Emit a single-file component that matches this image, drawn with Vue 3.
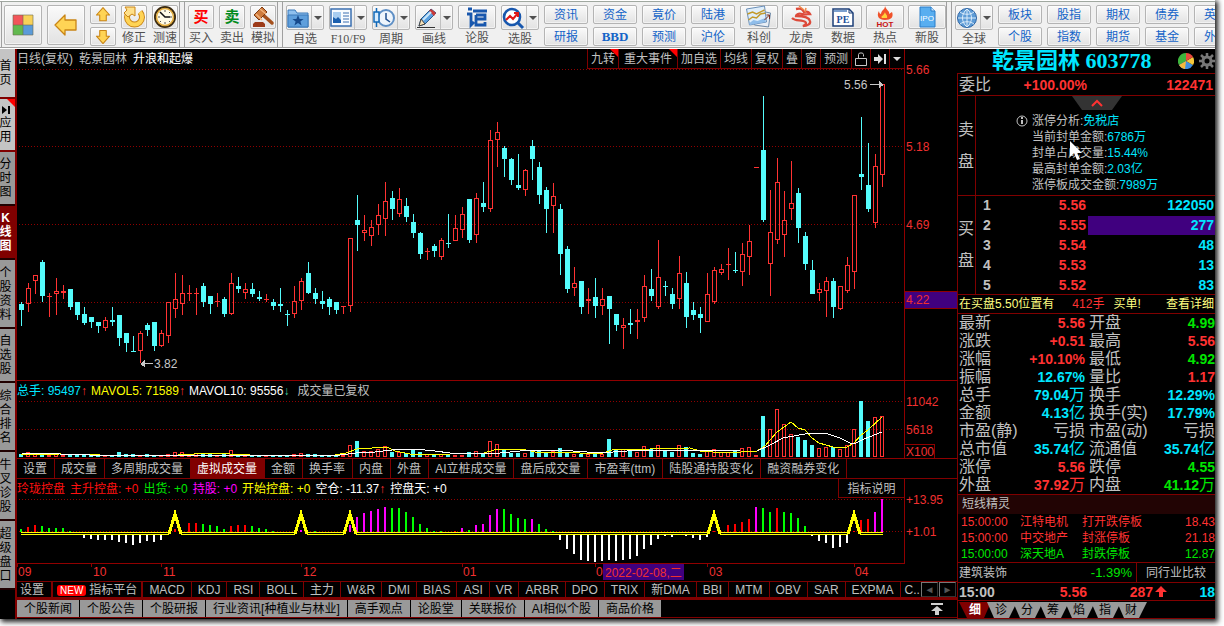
<script setup>
const px = (i) => 21 + 7 * i

// kind, wick top, wick bottom, body top, body bottom (r = rising, c = falling)
const candleRows = `c302,326,304,310 r283,312,288,304 r275,294,275,281 c260,302,262,296 r293,317,296,297 r278,315,291,294 r285,299,291,293 c289,310,289,307 c302,320,302,315 c307,325,314,323
c317,328,317,322 c322,333,322,326 r317,331,320,328 c307,326,320,322 c315,346,315,338 c333,352,333,343 c336,352,351,352 r331,363,333,351 c323,336,325,330 c322,351,322,346
r330,347,333,346 r302,343,302,336 r273,318,299,309 r275,315,293,304 r285,301,293,294 r288,315,293,294 c283,307,286,302 c296,314,296,304 r293,307,301,302 c297,317,299,314
r273,315,283,314 c277,293,286,289 r283,299,289,293 c283,297,289,294 c291,301,297,299 r294,302,299,300 c299,310,302,306 c288,312,304,306 c310,326,314,315 r286,318,301,314
r278,310,281,301 c262,294,273,293 c288,304,293,299 c291,309,301,304 c297,315,299,307 c302,314,302,310 r306,314,306,307 r238,312,238,306 c195,251,220,225 r215,241,230,233
r220,246,227,236 r204,235,215,225 r182,236,201,219 c191,220,198,209 r188,217,199,214 c198,222,206,217 c214,238,222,233 c232,259,233,254 r248,260,251,252 c244,257,246,251
r238,260,240,257 c214,248,243,244 r215,241,228,241 r207,238,214,230 c199,243,199,240 r193,243,198,235 c182,212,203,207 r130,212,140,209 r122,167,132,140 c146,177,148,159
c158,185,159,180 c154,190,185,188 r169,196,170,190 c140,180,146,159 c162,204,167,195 c187,233,190,209 r183,233,196,206 c204,275,209,254 c246,293,249,289 r267,296,283,288
c281,314,281,307 r288,314,299,301 c278,318,297,306 r288,315,299,306 c296,344,296,309 c314,331,314,325 r318,349,325,328 c309,334,323,325 r309,339,320,322 r275,322,286,318
c269,301,289,296 r240,309,277,307 c281,296,286,287 c288,309,294,304 r256,309,273,299 c272,328,283,317 c302,320,310,315 c307,333,314,318 r273,322,294,322 r267,304,270,302
r264,275,269,273 r248,280,264,265 c252,273,270,271 r243,286,254,272 r225,275,241,257 r167,168,167,168 c96,222,150,220 r190,296,232,264 r158,244,182,240 r191,257,220,235
r161,220,203,209 c188,243,193,228 c232,270,236,264 c260,294,270,294 r283,301,289,293 r277,317,281,291 c278,318,281,307 r286,310,286,309 r257,293,265,291 r195,289,195,272
c117,190,174,177 c143,212,185,209 r154,228,166,223 r84,187,84,175`
const candles = candleRows.split(/\s+/).map((s, i) => {
  const [top, bottom, open, close] = s.slice(1).split(',').map(Number)
  return { x: px(i), up: s[0] === 'r', top, bottom, open, close }
})

const volumes = [3, 5, 3, 3, 2, 3, 2, 2, 2, 2, 2, 2, 2, 2, 5, 3, 3, 2, 3, 2, 2, 3, 5, 5, 3, 4, 3, 3, 2, 3, 7, 3, 3, 2, 2, 2, 2, 2, 2, 3, 4, 3, 3, 2, 2, 2, 2, 12, 16, 6, 6, 8, 11, 5, 5, 4, 7, 5, 3, 2, 3, 3, 2, 2, 5, 6, 4, 16, 13, 7, 4, 4, 4, 7, 7, 5, 6, 9, 4, 3, 3, 3, 4, 3, 18, 7, 8, 6, 5, 11, 8, 12, 7, 5, 12, 10, 4, 3, 6, 8, 5, 5, 6, 9, 10, 2, 41, 28, 48, 33, 23, 20, 17, 12, 9, 10, 10, 8, 12, 28, 56, 36, 40, 41]
const volumeBars = volumes.map((h, i) => ({ x: px(i), h, up: candles[i].up }))

const controlRows = `g3 r5 r7 g6 g4 g4 g4 g1 n0 w3 w4 w5 w5 w5 w7 w8 w10 w8 w6 w7 w5 n0 r3 n0 r9 r9 g8 g7 g6 g3 r6 r7 r7 g6 g4 g3 g1 n0 n0 n0 m2 n0 g1 n0 n0 n0 n0 m7 m15 m19 m21 m23 m25 g24 g24 g20 g15 g8 g4 g1 g1 n0 r1 m4 g2 m7 m8 m17 m23 g23 g18 g14 g13 m13 g8 g3 g1 w5 w14 w19 w25 w26 w27 w26 w25 w26 w25 w24 w21 w14 w10 w4 w1 w2 n0 w1 w3 w5 w2 r1 n0 r7 r8 r10 r13 m25 g24 g20 r24 g20 g19 g14 g6 w1 w6 w8 w13 w12 w8 r1 r12 r13 m20 m33`
const hues = { g: '#00ff00', r: '#ff0000', m: '#ff00ff', w: '#ffffff', n: 'none' }
const controlBars = controlRows.split(' ').map((s, i) => {
  const h = Number(s.slice(1))
  return { x: px(i), y: s[0] === 'w' ? 535 : 532 - h, h, fill: hues[s[0]] }
})
const peaks = [175, 301, 350, 714, 854]
const baseSegments = [[21, 169], [181, 295], [307, 344], [356, 708], [720, 848], [860, 883]]

const months = [
  { x: 18, t: '09' }, { x: 93, t: '10' }, { x: 163, t: '11' }, { x: 303, t: '12' },
  { x: 463, t: '01' }, { x: 596, t: '0' }, { x: 709, t: '03' }, { x: 855, t: '04' },
]

const arrow = (d) => `<path d="${d}" fill="#ffd455" stroke="#c98516" stroke-width="1.3" stroke-linejoin="round"/>`
const icons = {
  home: '<rect x="1" y="1" width="10" height="10" fill="#f2555a"/><rect x="11" y="1" width="10" height="10" fill="#f8d158"/><rect x="1" y="11" width="10" height="10" fill="#62b94f"/><rect x="11" y="11" width="10" height="10" fill="#5b9bd9"/><path d="M1 1h20v20H1zM11 1v20M1 11h20" fill="none" stroke="#6a6a50" stroke-opacity=".6"/>',
  back: arrow('M0 11 10 1v5h11v10H10v5z'),
  up: arrow('M11 2 19 11h-4v7H7v-7H3z'),
  down: arrow('M11 19 3 10h4V3h8v7h4z'),
  fix: '<path d="M6 6a7.500 7.500 0 1 0 11 0" fill="none" stroke="#c98516" stroke-width="6"/><path d="M6 6a7.500 7.500 0 1 0 11 0" fill="none" stroke="#ffd455" stroke-width="4"/><path d="M2 1h10v9l-3-2-4 3-4-4 3-3z" fill="#ffe08a" stroke="#c98516"/>',
  clock: '<circle cx="11" cy="11" r="10" fill="#fffbe6" stroke="#3a2a10" stroke-width="2"/><circle cx="11" cy="11" r="8.500" fill="none" stroke="#e0a838" stroke-width="1.500"/><path d="M6 6l5 5h5" fill="none" stroke="#111" stroke-width="1.500"/><path d="M11 4v2M11 16v2M4 11h2M16 11h2M6 16l1-1M15 15l1 1M15 7l1-1" stroke="#555"/>',
  gavel: '<path d="M10 8l10 9" stroke="#a5501c" stroke-width="3.500" stroke-linecap="round"/><path d="M2 9 10 1l5 5-8 8z" fill="#cf7b3c" stroke="#7c3a12"/><path d="M4 8l6 6M8 3l6 5" stroke="#f2b27a" stroke-width="1.500"/><path d="M1 21v-3l2-2h8l2 2v3z" fill="#9c3a18"/>',
  folder: '<path d="M1 3h7l2 3h11v14H1z" fill="#8fc0ee" stroke="#3a78b8"/><path d="M1 8h20v12H1z" fill="#5f9fdc" stroke="#3a78b8"/><path d="M11 8l1.600 4h4l-3.200 2.500 1.200 4L11 16l-3.600 2.500 1.200-4L5.400 12h4z" fill="#174a8c"/>',
  news: '<rect x="1" y="2" width="20" height="17" fill="#f8fbff" stroke="#3a6fb0" stroke-width="1.500"/><path d="M3 5h8v11H3z" fill="#a9cdf0"/><path d="M3 10l3 2 2-2 3 3v3H3z" fill="#1b5fae"/><path d="M13 6h6M13 9h6M13 12h6M13 15h6" stroke="#3a6fb0"/>',
  period: '<circle cx="13" cy="11" r="8" fill="#eef5fc" stroke="#5e8fc5" stroke-width="2"/><path d="M13 6v6l4 3" fill="none" stroke="#1f4f8f" stroke-width="1.500"/><path d="M3.500 1v19" stroke="#0f68b8" stroke-width="1.500"/><path d="M1 5h5v10H1z" fill="#d8ecfd" stroke="#0f68b8" stroke-width="1.500"/>',
  pen: '<path d="M3 19l2-7L15 2l5 4-11 11z" fill="#5aa0e0" stroke="#28588c"/><path d="M15 2l5 4-2 3-5-5z" fill="#c83a3a"/><path d="M3 19l2-7 4 5z" fill="#f8e2b8" stroke="#444"/><path d="M7 13 15 5" stroke="#cbe6fa" stroke-width="2"/><path d="M1 20.500h18" stroke="#333"/>',
  forum: '<path d="M2 3h4M1 8h4v11l3-3M7 5h14M10 9v10h9v-3M10 9h9v4h-9" fill="none" stroke="#1857ad" stroke-width="2.800"/>',
  pick: '<circle cx="10" cy="10" r="8" fill="#fff" stroke="#1857ad" stroke-width="2.600"/><path d="M16 16l5 5" stroke="#1857ad" stroke-width="3"/><path d="M4 13l4-4 3 3 5-6M12 6h4v4" fill="none" stroke="#e01818" stroke-width="2"/>',
  sci: '<path d="M9 4l15 3-2 14-14-2z" fill="#e8eef5" stroke="#6f8aa8"/><path d="M0 3 18 0l2 16-17 3z" fill="#dfeefb" stroke="#6a8fb8"/><path d="M1 8l5-2 4 2 8-4M2 14l4-3 4 1 4-4 5-1" fill="none" stroke="#c39a2a" stroke-width="1.500"/><path d="M3 17l4-3 4 1 8-3v4L3 19z" fill="#8fbdea"/><path d="M18 14l5-5M20 9h3v4" fill="none" stroke="#7c3020"/>',
  dragon: '<path d="M6 3c5-1 6 0 8 3 3-1 5 0 6 2-3 0-4 1-8 0-4-1-6 1-6 2 6 0 13 1 14 5 1 3-3 5-7 5 4-2 4-4 0-5-4-1-8 0-11-3" fill="none" stroke="#dd4a3a" stroke-width="2.300"/><path d="M9 0l5 4M16 2l-1 4" stroke="#ef8a4a" stroke-width="1.500"/>',
  pe: '<path d="M1 3h16l4 4v13H1z" fill="#fff" stroke="#1c3f78" stroke-width="1.500"/><path d="M17 3v4h4" fill="none" stroke="#1c3f78"/><path d="M2 5h13" stroke="#7ba0cf" stroke-width="2"/><text x="11" y="17" text-anchor="middle" font-size="10" font-weight="bold" fill="#1c4f9a" font-family="Liberation Serif">PE</text>',
  hot: '<path d="M11 0c1 4 5 5 4 8l3-2c2 5-1 8-7 8s-9-4-6-9c0 2 1 3 2 3 0-4 4-4 4-8z" fill="#f0522a"/><path d="M11 6c0 2 3 3 2 6H8c-2-2 2-2 3-6z" fill="#ffd23c"/><text x="11" y="21" text-anchor="middle" font-size="8" font-weight="bold" fill="#c81414" font-family="Liberation Sans">HOT</text>',
  ipo: '<path d="M4 1h11l4 4v16H4z" fill="#58aef0" stroke="#2a7cc8"/><path d="M15 1v4h4" fill="#c7e4fb" stroke="#2a7cc8"/><text x="11" y="15" text-anchor="middle" font-size="8" fill="#fff" font-family="Liberation Sans">IPO</text>',
  globe: '<circle cx="11" cy="11" r="9.500" fill="#5d9bd6" stroke="#2c64a4"/><path d="M11 2v18M2 11h18M4 5c4 3 10 3 14 0M4 17c4-3 10-3 14 0M11 2c-6 5-6 13 0 18M11 2c6 5 6 13 0 18" fill="none" stroke="#dcecfa"/>',
}

const groupA = [{ label: '修正', icon: 'fix' }, { label: '测速', icon: 'clock' }]
const groupB = [{ label: '买入', glyph: '买', tone: 'buy' }, { label: '卖出', glyph: '卖', tone: 'sell' }, { label: '模拟', icon: 'gavel' }]
const groupC = [
  { label: '自选', icon: 'folder', drop: true }, { label: 'F10/F9', icon: 'news', drop: true }, { label: '周期', icon: 'period', drop: true },
  { label: '画线', icon: 'pen', drop: true }, { label: '论股', icon: 'forum' }, { label: '选股', icon: 'pick', drop: true },
]
const pairsA = [['资讯', '研报'], ['资金', 'BBD'], ['竟价', '预测'], ['陆港', '沪伦']]
const groupD = [{ label: '科创', icon: 'sci' }, { label: '龙虎', icon: 'dragon' }, { label: '数据', icon: 'pe' }, { label: '热点', icon: 'hot' }, { label: '新股', icon: 'ipo' }]
const pairsB = [['板块', '个股'], ['股指', '指数'], ['期权', '期货'], ['债券', '基金'], ['英', '外']]

const sideTabs = [
  { t: '首页', h: 's50', tone: 'light' }, { t: '应用', h: 's52', tone: 'light', flag: true }, { t: '分时图', h: 's54' },
  { t: 'K线图', h: 's54', tone: 'active' }, { t: '个股资料', h: 's68' }, { t: '自选股', h: 's54' },
  { t: '综合排名', h: 's68' }, { t: '牛叉诊股', h: 's68' }, { t: '超级盘口', h: 's68' },
]
const chartTools = [{ t: '九转', flag: true }, { t: '重大事件', flag: true, wide: true }, { t: '加自选' }, { t: '均线' }, { t: '复权' }, { t: '叠' }, { t: '窗' }, { t: '预测' }]
const volumeTabs = ['设置', '成交量', '多周期成交量', '虚拟成交量', '金额', '换手率', '内盘', '外盘', 'AI立桩成交量', '盘后成交量', '市盈率(ttm)', '陆股通持股变化', '融资融券变化']
const indicatorTabs = ['MACD', 'KDJ', 'RSI', 'BOLL', '主力', 'W&R', 'DMI', 'BIAS', 'ASI', 'VR', 'ARBR', 'DPO', 'TRIX', '新DMA', 'BBI', 'MTM', 'OBV', 'SAR', 'EXPMA', 'C..']
const pageTabs = ['个股新闻', '个股公告', '个股研报', '行业资讯[种植业与林业]', '高手观点', '论股堂', '关联报价', 'AI相似个股', '商品价格']

const analysis = [
  ['涨停分析', '免税店'], ['当前封单金额', '6786万'], ['封单占成交量', '15.44%'], ['最高封单金额', '2.03亿'], ['涨停板成交金额', '7989万'],
]
const bids = [['5.56', '122050'], ['5.55', '277'], ['5.54', '48'], ['5.53', '13'], ['5.52', '83']]
const stats = [
  ['最新', '5.56', 'red', '开盘', '4.99', 'green'],
  ['涨跌', '+0.51', 'red', '最高', '5.56', 'red'],
  ['涨幅', '+10.10%', 'red', '最低', '4.92', 'green'],
  ['振幅', '12.67%', 'cyan', '量比', '1.17', 'red'],
  ['总手', '79.04万', 'cyan', '换手', '12.29%', 'cyan'],
  ['金额', '4.13亿', 'cyan', '换手(实)', '17.79%', 'cyan'],
  ['市盈(静)', '亏损', 'grey', '市盈(动)', '亏损', 'grey'],
  ['总市值', '35.74亿', 'cyan', '流通值', '35.74亿', 'cyan'],
  ['涨停', '5.56', 'red', '跌停', '4.55', 'green'],
  ['外盘', '37.92万', 'red', '内盘', '41.12万', 'green'],
]
const number = (v) => v.replace(/[^\d.+\-%]/g, '')
const unit = (v) => v.replace(/[\d.+\-%]/g, '')
const alerts = [
  ['15:00:00', '江特电机', '打开跌停板', '18.43', 'red'],
  ['15:00:00', '中交地产', '封涨停板', '21.18', 'red'],
  ['15:00:00', '深天地A', '封跌停板', '12.87', 'green'],
]
const detailTabs = ['细', '诊', '分', '筹', '焰', '指', '财']
</script>

<template>
  <div class="app">
    <header class="toolbar">
      <div class="group first">
        <button class="face big" aria-label="主页"><svg class="ico" viewBox="0 0 22 22" v-html="icons.home" /></button>
        <button class="face big" aria-label="后退"><svg class="ico" viewBox="0 0 22 22" v-html="icons.back" /></button>
        <div class="stack arrows">
          <button class="face mini" aria-label="上一个"><svg class="ico small" viewBox="0 0 22 22" v-html="icons.up" /></button>
          <button class="face mini" aria-label="下一个"><svg class="ico small" viewBox="0 0 22 22" v-html="icons.down" /></button>
        </div>
        <button v-for="b in groupA" :key="b.label" class="tool slim">
          <span class="face"><svg class="ico" viewBox="0 0 22 22" v-html="icons[b.icon]" /></span><span>{{ b.label }}</span>
        </button>
      </div>
      <div class="group">
        <button v-for="b in groupB" :key="b.label" class="tool slim">
          <span class="face"><svg v-if="b.icon" class="ico" viewBox="0 0 22 22" v-html="icons[b.icon]" /><b v-else :class="['glyph', b.tone]">{{ b.glyph }}</b></span><span>{{ b.label }}</span>
        </button>
      </div>
      <div class="group open">
        <button v-for="b in groupC" :key="b.label" class="tool">
          <span class="face"><svg class="ico" viewBox="0 0 22 22" v-html="icons[b.icon]" /><i v-if="b.drop" class="drop" /></span><span :class="{ serif: b.label === 'F10/F9' }">{{ b.label }}</span>
        </button>
        <div v-for="p in pairsA" :key="p[0]" class="stack">
          <button v-for="t in p" :key="t" :class="['face', 'text', { latin: t === 'BBD' }]">{{ t }}</button>
        </div>
      </div>
      <div class="group tight">
        <button v-for="b in groupD" :key="b.label" class="tool">
          <span class="face"><svg :class="['ico', { wide: b.icon === 'sci' }]" :viewBox="b.icon === 'sci' ? '0 0 25 22' : '0 0 22 22'" v-html="icons[b.icon]" /></span><span>{{ b.label }}</span>
        </button>
      </div>
      <div class="group last">
        <button class="tool">
          <span class="face"><svg class="ico" viewBox="0 0 22 22" v-html="icons.globe" /><i class="drop" /></span><span>全球</span>
        </button>
        <div v-for="p in pairsB" :key="p[0]" class="stack">
          <button v-for="t in p" :key="t" :class="['face', 'text', { edge: t.length === 1 }]">{{ t }}</button>
        </div>
      </div>
    </header>

    <div class="body">
      <nav class="side">
        <button v-for="s in sideTabs" :key="s.t" :class="[s.h, s.tone]">
          <i v-if="s.flag" class="flag" />
          <svg v-if="s.flag" class="next" viewBox="0 0 8 8"><path d="M0 0l5 4-5 4zM6 0h2v8H6z" /></svg>
          <span>{{ s.t }}</span>
        </button>
      </nav>

      <main class="main">
        <div class="chart-head">
          <h1>日线(复权)</h1><span>乾景园林</span><span class="white">升浪和起爆</span>
          <div class="chart-tools">
            <button v-for="t in chartTools" :key="t.t" :class="{ wide: t.wide }">{{ t.t }}<i v-if="t.flag" class="flag" /></button>
            <button aria-label="锁定"><svg class="glyph-ico" viewBox="0 0 12 14"><path d="M.5 6.500h11v7H.5zM3.500 6.500v-4l1-1.500h3l1 1.500v2" fill="none" stroke="#c8c8c8" /></svg></button>
            <button aria-label="最新"><svg class="glyph-ico" viewBox="0 0 12 14"><path d="M0 5h4V2l5 5-5 5V9H0zM10 2h2v10h-2z" fill="#e0e0e0" /></svg></button>
            <button class="menu" aria-label="更多"><i class="drop light" /></button>
          </div>
        </div>

        <svg class="plot price" viewBox="17 69 940 312" preserveAspectRatio="xMaxYMid meet">
          <g stroke="#900000" stroke-dasharray="1 2">
            <path d="M19 69.500H903M19 146.500H903M19 224.500H903M19 302.500H903" />
          </g>
          <g v-for="c in candles" :key="c.x">
            <template v-if="c.up">
              <rect v-if="c.close - c.open < 3" :x="c.x - 2" :y="c.open" width="5" :height="c.close - c.open" fill="#ff3232" />
              <rect v-else :x="c.x - 1.5" :y="c.open + 0.5" width="4" :height="c.close - c.open - 1" fill="none" stroke="#ff3232" />
              <rect v-if="c.open > c.top" :x="c.x" :y="c.top" width="1" :height="c.open - c.top" fill="#ff3232" />
              <rect v-if="c.bottom > c.close" :x="c.x" :y="c.close" width="1" :height="c.bottom - c.close" fill="#ff3232" />
            </template>
            <template v-else>
              <rect :x="c.x" :y="c.top" width="1" :height="c.bottom - c.top" fill="#54fcfc" />
              <rect :x="c.x - 2" :y="c.open" width="5" :height="c.close - c.open" fill="#54fcfc" />
            </template>
          </g>
          <path d="M870 84.500h13M141 363.500h12" stroke="#c8c8c8" />
          <path d="M879 81v7l5-3zM145 360v7l-5-3z" fill="#c8c8c8" />
          <text x="844" y="89" fill="#c8c8c8">5.56</text>
          <text x="154" y="368" fill="#c8c8c8">3.82</text>
          <path d="M904.500 49V381M17 380.500H957" stroke="#900000" />
          <rect x="905" y="291" width="52" height="18" fill="#40007f" />
          <path d="M905 291.500h52M905 308.500h52" stroke="#900000" />
          <g fill="#f03030"><text x="906" y="74">5.66</text><text x="906" y="151">5.18</text><text x="906" y="229">4.69</text><text x="906" y="304">4.22</text></g>
        </svg>

        <div class="legend">
          <span class="cyan">总手: 95497<i>↑</i></span><span class="yellow">MAVOL5: 71589<i>↑</i></span><span class="white">MAVOL10: 95556<i class="down">↓</i></span><span>成交量已复权</span>
        </div>
        <svg class="plot volume" viewBox="17 401 940 58" preserveAspectRatio="xMaxYMid meet">
          <path d="M19 401.500H903M19 429.500H903" stroke="#900000" stroke-dasharray="1 2" />
          <g v-for="v in volumeBars" :key="v.x">
            <rect v-if="v.up && v.h > 2" :x="v.x - 1.500" :y="457.500 - v.h" width="3" :height="v.h - 1" fill="none" stroke="#ff3232" />
            <rect v-else :x="v.x - 2" :y="457 - v.h" width="4" :height="v.h" :fill="v.up ? '#ff3232' : '#54fcfc'" />
          </g>
          <path d="M21 455 60 454 100 455H178L210 453 250 455H335L346 453 357 449 372 448 387 447 395 451 410 454H450L484 453 498 449H522L535 452H560L600 454 612 450 650 449 690 448 700 451 725 453 757 451 765 446 777 432 791 422 798 428 805 430 812 438 819 443 833 447H847L854 443 861 435 868 430 882 417" fill="none" stroke="#ffff00" />
          <path d="M21 453 60 454 90 455H340L356 453 375 452 392 450 415 449 435 451 450 453H500L520 451 560 450 600 453 640 450H690L740 451 757 451 770 445 783 438 805 434 825 433 840 438 850 443H856L864 439 882 432" fill="none" stroke="#ffffff" />
          <path d="M904.500 381V459M17 458.500H957M905 444.500h29.500v13.500" stroke="#900000" fill="none" />
          <g fill="#f03030"><text x="906" y="406">11042</text><text x="906" y="434">5618</text><text x="906" y="456">X100</text></g>
        </svg>

        <div class="tabs">
          <button v-for="t in volumeTabs" :key="t" :class="{ active: t === '虚拟成交量' }">{{ t }}</button>
        </div>

        <div class="legend control">
          <span class="red">玲珑控盘</span><span class="red">主升控盘: +0</span><span class="green">出货: +0</span><span class="magenta">持股: +0</span><span class="yellow">开始控盘: +0</span><span class="white">空仓: -11.37<i>↑</i></span><span class="white">控盘天: +0</span>
          <button class="explain">指标说明</button>
        </div>
        <svg class="plot months" viewBox="17 499 940 82" preserveAspectRatio="xMaxYMid meet">
          <path d="M19 499.500H903M19 531.500H903" stroke="#900000" stroke-dasharray="1 2" />
          <rect v-for="b in controlBars" :key="b.x" :x="b.x - 1" :y="b.y" width="2" :height="b.h" :fill="b.fill" />
          <g fill="#ffff00">
            <template v-for="s in baseSegments" :key="s[0]">
              <rect :x="s[0]" y="532" :width="s[1] - s[0]" height="1" /><rect :x="s[0]" y="534" :width="s[1] - s[0]" height="1" />
            </template>
          </g>
          <path v-for="p in peaks" :key="p" :d="`M${p - 6} 534 l6 -20 6 20`" fill="none" stroke="#ffff00" stroke-width="3" />
          <path d="M904.500 479V564M17 563.500H905M17.500 563v4M91.500 563v4M161.500 563v4M301.500 563v4M462.500 563v4M595.500 563v4M707.500 563v4M854.500 563v4" stroke="#900000" fill="none" />
          <g fill="#f03030">
            <text x="906" y="504">+13.95</text><text x="906" y="536">+1.01</text>
            <text v-for="m in months" :key="m.t" :x="m.x" y="576">{{ m.t }}</text>
          </g>
          <rect x="603" y="564" width="81" height="16" fill="#40007f" />
          <text x="605" y="577" fill="#f03030">2022-02-08,二</text>
        </svg>

        <div class="tabs indicator">
          <button class="set">设置</button>
          <button class="platform"><b>NEW</b>指标平台</button>
          <button v-for="t in indicatorTabs" :key="t" :class="{ cut: t === 'C..' }">{{ t }}</button>
          <button class="scroll" aria-label="向左">◄</button><button class="scroll" aria-label="向右">►</button>
        </div>
        <div class="pages">
          <button v-for="t in pageTabs" :key="t">{{ t }}</button>
          <button class="top" aria-label="展开"><svg viewBox="0 0 12 12"><path d="M0 0h12v2H0zM6 3l6 5H8v4H4V8H0z" fill="#d0d0d0" /></svg></button>
        </div>
      </main>

      <aside class="quote">
        <div class="name">
          <h2>乾景园林 603778</h2>
          <svg class="pie" viewBox="0 0 16 16"><path d="M8 8V0a8 8 0 0 0-7 12z" fill="#3cb43c" /><path d="M8 8 1 12a8 8 0 0 0 14 0z" fill="#3f8fe0" /><path d="M8 8l7 4A8 8 0 0 0 15 4z" fill="#f5c83c" /><path d="M8 8V0a8 8 0 0 1 7 4z" fill="#e8483c" /><path d="M1 12 8 8l-1 8a8 8 0 0 1-6-4z" fill="#f5b83c" /></svg>
          <svg class="gear" viewBox="0 0 16 16"><circle cx="8" cy="8" r="4" fill="none" stroke="#777" stroke-width="3" /><path d="M8 0v3M8 13v3M0 8h3M13 8h3M2 2l3 3M11 11l3 3M14 2l-3 3M5 11l-3 3" stroke="#777" stroke-width="2.500" /></svg>
        </div>
        <div class="sheet">
          <div class="ratio"><span>委比</span><b class="red">+100.00%</b><b class="red">122471</b></div>
          <section class="asks">
            <div class="word"><span>卖</span><span>盘</span></div>
            <div class="info">
              <button class="fold" aria-label="收起"><svg viewBox="0 0 50 14"><path d="M0 0h50l-10 14H10z" fill="#333" /><path d="M20 10l5-5 5 5" fill="none" stroke="#ff3232" stroke-width="2" /></svg></button>
              <svg class="about" viewBox="0 0 12 12"><circle cx="6" cy="6" r="5" fill="none" stroke="#c0c0c0" /><path d="M5 2h2v2H5zM5 5h2v4H5z" fill="#c0c0c0" /></svg>
              <p v-for="a in analysis" :key="a[0]">{{ a[0] }}:<span class="cyan">{{ a[1] }}</span></p>
              <svg class="cursor" viewBox="0 0 12 19"><path d="M0 0v16l4-4 3 7 3-1-3-6h5z" fill="#fff" /></svg>
            </div>
          </section>
          <section class="bids">
            <div class="word"><span>买</span><span>盘</span></div>
            <table>
              <tbody>
                <tr v-for="(b, i) in bids" :key="i"><th>{{ i + 1 }}</th><td class="red">{{ b[0] }}</td><td class="cyan amount" :class="{ hit: i === 1 }"><span>{{ b[1] }}</span></td></tr>
              </tbody>
            </table>
          </section>
          <div class="notice"><span>在买盘5.50位置有</span><span class="red">412手</span><span>买单!</span><a href="#">查看详细</a></div>
          <table class="stats">
            <tbody>
              <tr v-for="s in stats" :key="s[0]">
                <th>{{ s[0] }}</th><td :class="s[2]"><b>{{ number(s[1]) }}</b>{{ unit(s[1]) }}</td>
                <th class="second">{{ s[3] }}</th><td :class="s[5]"><b>{{ number(s[4]) }}</b>{{ unit(s[4]) }}</td>
              </tr>
            </tbody>
          </table>
          <h3>短线精灵</h3>
          <table class="alerts">
            <tbody>
              <tr v-for="a in alerts" :key="a[1]" :class="a[4]"><td>{{ a[0] }}</td><td>{{ a[1] }}</td><td>{{ a[2] }}</td><td>{{ a[3] }}</td></tr>
            </tbody>
          </table>
          <div class="sector"><span>建筑装饰</span><span class="green change">-1.39%</span><button>同行业比较</button></div>
          <div class="tick"><b>15:00</b><b class="red">5.56</b><b class="red">287</b><svg viewBox="0 0 12 12"><path d="M6 0l6 6H8v5H4V6H0z" fill="#ff3232" /></svg><b class="cyan">18</b></div>
          <div class="detail"><button v-for="t in detailTabs" :key="t" :class="{ active: t === '细' }">{{ t }}</button></div>
        </div>
      </aside>
    </div>
  </div>
</template>

<style>
html { background: #fff; }
body { margin: 0; overflow: hidden; }
</style>

<style scoped>
.app { margin: 0 9px 8px 0; background: #000; color: #c0c0c0; font: 12px/16px "Liberation Sans", "Noto Sans CJK SC", sans-serif; box-shadow: 2px 2px 5px 1px #222; }
button { margin: 0; padding: 0; border: 0; background: none; color: inherit; font: inherit; white-space: nowrap; }
table { border-collapse: collapse; }
th, td { padding: 0; font-weight: normal; text-align: left; }
h1, h2, h3, p { margin: 0; font: inherit; }
i { font-style: normal; }
.red { color: #ff3232; }
.green { color: #00e600; }
.cyan { color: #00e6ff; }
.grey { color: #c0c0c0; }
.white { color: #fff; }
.yellow { color: #ffff00; }
.magenta { color: #ff00ff; }

.toolbar { display: flex; height: 49px; box-sizing: border-box; overflow: hidden; background: #f0f0f0; border-top: 1px solid #fff; border-bottom: 1px solid #fff; box-shadow: inset 0 1px #a0a8a0, inset 0 -1px #a0a0a0; color: #505050; }
.group { display: flex; flex: none; gap: 5px; padding: 4px 1px 0 3px; margin-left: 4px; border-left: 1px solid #a0a0a0; border-right: 1px solid #a0a0a0; }
.group.first { margin-left: 1px; padding-left: 2px; padding-right: 1px; }
.group.tight { gap: 4px; margin-left: 0; border-left: 0; padding-left: 5px; padding-right: 0; }
.group.open { border-right: 0; padding-right: 0; }
.group.last { border-right: 0; }
.stack { display: flex; flex-direction: column; gap: 3px; }
.stack.arrows { width: 26px; }
.face { display: flex; align-items: center; justify-content: center; box-sizing: border-box; border: 1px solid #b4b4b4; border-radius: 2px; background: linear-gradient(#fafafa, #e2e2e2); box-shadow: inset 0 0 0 1px #fff8; }
.big { width: 38px; height: 40px; }
.mini { width: 26px; height: 19px; }
.text { width: 44px; height: 19px; color: #1464c8; }
.text.latin { font-family: "Liberation Serif", serif; font-weight: bold; font-size: 13px; }
.text.edge { justify-content: flex-start; padding-left: 9px; }
.serif { font-family: "Liberation Serif", serif; }
.tool { display: flex; flex-direction: column; width: 38px; }
.tool.slim { width: 26px; }
.tool .face { height: 25px; }
.tool > span:last-child { text-align: center; line-height: 19px; }
.ico { width: 22px; height: 22px; flex: none; overflow: visible; }
.ico.small { width: 18px; height: 18px; }
.ico.wide { width: 28px; }
.glyph { font-size: 15px; }
.buy { color: #f00; }
.sell { color: #008a1c; }
.drop { width: 12px; height: 23px; flex: none; margin-left: 2px; border-left: 1px solid #c0c0c0; display: flex; align-items: center; justify-content: center; }
.drop::after { content: ""; border: 4px solid transparent; border-top-color: #505050; border-bottom: 0; }
.drop.light { border: 0; margin: 0; height: 18px; }
.drop.light::after { border-top-color: #ddd; }

.body { display: flex; }
.side { display: flex; flex: none; flex-direction: column; width: 15px; border-right: 2px solid #800000; }
.side button { position: relative; box-sizing: border-box; display: flex; flex-direction: column; align-items: center; justify-content: center; padding-right: 4px; border-bottom: 2px solid #200000; background: #999; color: #000; line-height: 14px; white-space: normal; }
.side span { width: 12px; text-align: center; word-break: break-all; }
.side .light { background: #c4c4c4; border-color: #800000; }
.side .active { background: #800000; color: #fff; font-weight: bold; }
.s50 { height: 50px; }
.s52 { height: 53px; }
.s54 { height: 54px; }
.s68 { height: 69px; }
.next { width: 8px; height: 8px; margin-bottom: 2px; }
.flag { position: absolute; top: 0; right: 0; border: 4px solid #f00; border-left-color: transparent; border-bottom-color: transparent; }

.main { flex: 1; min-width: 0; background: #000; }
.chart-head { display: flex; gap: 6px; height: 20px; line-height: 21px; }
.chart-tools { display: flex; margin-left: auto; margin-right: 52px; border-left: 1px solid #800000; }
.chart-tools button { position: relative; box-sizing: border-box; height: 20px; padding: 0 3px; border: 1px solid #800000; border-width: 0 1px 1px 0; line-height: 21px; }
.chart-tools .wide { padding: 0 5px; }
.chart-tools .menu { padding: 0 1px; }
.glyph-ico { display: block; width: 12px; height: 14px; }
.plot { position: relative; display: block; width: 100%; overflow: visible; font-size: 12px; pointer-events: none; }
.plot path, .plot rect { shape-rendering: crispEdges; }
.price { height: 312px; }
.volume { height: 58px; }
.months { height: 82px; }
.legend { display: flex; gap: 4px; height: 20px; line-height: 21px; white-space: nowrap; }
.legend i { color: #ff3232; }
.legend .down { color: #40d0a0; margin-right: 4px; }
.control { gap: 5px; }
.control .red { color: #ff1010; }
.explain { box-sizing: border-box; width: 66px; height: 19px; margin-left: auto; margin-right: 53px; border: 1px solid #800000; border-width: 0 0 1px 1px; }
.tabs { display: flex; box-sizing: border-box; height: 20px; border-bottom: 1px solid #800000; overflow: hidden; }
.tabs button { flex: none; padding: 0 7px 0 6px; border-right: 1px solid #800000; line-height: 21px; }
.tabs .active { background: #800000; color: #fff; }
.tabs.indicator { height: 19px; border-top: 1px solid #800000; border-bottom: 3px solid #800000; }
.indicator button { padding: 0 6px; line-height: 16px; }
.indicator .set { padding: 0 7px 0 3px; border-right-width: 2px; }
.indicator .platform { padding: 0 4px; border-right-width: 2px; }
.platform b { display: inline-block; margin-right: 3px; padding: 0 3px; border-radius: 3px; background: #f00; color: #fff; font-size: 10px; font-weight: normal; line-height: 11px; }
.indicator .cut { padding: 0 0 0 4px; margin-right: auto; border: 0; }
.indicator .scroll { width: 17px; padding: 0; margin-right: 1px; border: 1px solid #777; border-right-color: #333; border-bottom-color: #333; box-sizing: border-box; color: #555; font-size: 10px; line-height: 12px; }
.pages { display: flex; gap: 1px; height: 17px; border-bottom: 1px solid #800000; color: #000; }
.pages button { padding: 0 7px; background: #999; line-height: 18px; }
.pages .top { margin-left: auto; margin-right: 8px; padding: 0; background: none; }
.top svg { display: block; width: 12px; height: 12px; margin: 2px 6px; }

.quote { flex: 0 0 258px; min-width: 0; }
.name { display: flex; align-items: center; height: 24px; padding-left: 35px; color: #00e6ff; overflow: hidden; }
.name h2 { flex: 1; font: bold 22px/24px "Liberation Serif", "Noto Sans CJK SC", serif; white-space: nowrap; }
.pie, .gear { width: 16px; height: 16px; margin-left: 5px; }
.sheet { border: 1px solid #800000; border-right: 0; }
.ratio { display: grid; grid-template-columns: 40px 88px 1fr; height: 21px; padding: 0 2px 0 1px; border-bottom: 1px solid #800000; font-size: 14px; line-height: 22px; }
.ratio span { font-size: 16px; }
.ratio b { text-align: right; }
.asks, .bids { display: flex; border-bottom: 1px solid #800000; }
.word { display: flex; flex: none; flex-direction: column; justify-content: center; gap: 16px; width: 17px; border-right: 1px solid #800000; font-size: 16px; line-height: 16px; }
.info { position: relative; flex: 1; height: 82px; padding: 17px 0 0 56px; }
.info p { line-height: 16px; white-space: nowrap; }
.fold { position: absolute; top: 0; left: 96px; }
.fold svg { display: block; width: 50px; height: 14px; }
.about { position: absolute; top: 19px; left: 40px; width: 12px; height: 12px; }
.cursor { position: absolute; top: 45px; left: 94px; width: 12px; height: 19px; }
.bids { height: 98px; overflow: hidden; }
.bids table { flex: 1; width: 100%; height: 100px; font-size: 14px; line-height: 19px; }
.bids tr { height: 20px; }
.bids th, .bids td { vertical-align: top; font-weight: bold; }
.bids th { width: 30px; padding-left: 7px; }
.bids td { text-align: right; }
.bids td.red { width: 73px; }
.bids .amount { padding-left: 2px; }
.bids .amount span { display: block; padding-right: 1px; }
.bids .hit span { background: #40007f; }
.notice { display: flex; height: 18px; padding: 0 1px; border-bottom: 1px solid #800000; color: #ffff80; line-height: 18px; white-space: nowrap; }
.notice .red { margin: 0 9px 0 18px; }
.notice a { margin-left: auto; color: inherit; text-decoration: none; }
.stats { width: 100%; font-size: 16px; line-height: 18px; table-layout: fixed; }
.stats tr { height: 18px; }
.stats th, .stats td { box-sizing: border-box; white-space: nowrap; }
.stats th { width: 58px; padding-left: 1px; }
.stats td { width: 70px; padding-right: 1px; text-align: right; }
.stats th.second { width: 60px; padding-left: 3px; }
.stats b { font-size: 14px; line-height: 14px; }
h3 { height: 19px; padding-left: 4px; border-top: 1px solid #800000; background: #220404; line-height: 19px; }
.alerts { width: 100%; line-height: 16px; white-space: nowrap; }
.alerts tr { height: 16px; }
.alerts td:first-child { width: 59px; padding-left: 3px; }
.alerts td:nth-child(2) { width: 62px; }
.alerts td:last-child { text-align: right; }
.sector { display: flex; height: 19px; padding-left: 1px; border: 1px solid #800000; border-width: 1px 0; line-height: 20px; }
.sector .change { margin-left: auto; padding-right: 4px; font-size: 13px; }
.sector button { width: 79px; border-left: 1px solid #800000; }
.tick { display: grid; grid-template-columns: 48px 80px 66px 16px 1fr; align-items: center; height: 17px; padding-left: 1px; border-bottom: 1px solid #800000; font-size: 14px; }
.tick b { text-align: right; }
.tick b:first-child { text-align: left; }
.tick svg { width: 12px; height: 12px; margin-left: 2px; }
.detail { display: flex; height: 17px; padding: 1px 0 0 1px; box-sizing: border-box; }
.detail button { width: 32px; height: 16px; margin-right: -6px; background: #999; color: #000; line-height: 16px; clip-path: polygon(2px 0, 32px 0, 24px 100%, 9px 100%); }
.detail .active { background: #800000; color: #fff; font-weight: bold; clip-path: polygon(0 0, 32px 0, 25px 100%, 8px 100%); }
</style>
